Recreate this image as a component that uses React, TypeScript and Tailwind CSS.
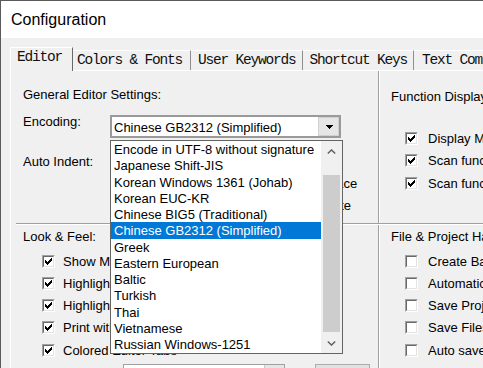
import React from "react";

function Check({ checked }: { checked?: boolean }) {
  return (
    <span className="block w-[13px] h-[13px] shrink-0 border border-t-[#a0a0a0] border-l-[#a0a0a0] border-r-white border-b-white">
      <span className="block w-full h-full border border-t-[#696969] border-l-[#696969] border-r-[#e3e3e3] border-b-[#e3e3e3] bg-white">
        {checked && (
          <svg width="9" height="9" viewBox="0 0 9 9" shapeRendering="crispEdges" className="block">
            <rect x="1" y="3" width="1" height="3" fill="#000" />
            <rect x="2" y="4" width="1" height="3" fill="#000" />
            <rect x="3" y="5" width="1" height="3" fill="#000" />
            <rect x="4" y="4" width="1" height="3" fill="#000" />
            <rect x="5" y="3" width="1" height="3" fill="#000" />
            <rect x="6" y="2" width="1" height="3" fill="#000" />
            <rect x="7" y="1" width="1" height="3" fill="#000" />
          </svg>
        )}
      </span>
    </span>
  );
}

function Row({ checked, label, gap, h }: { checked?: boolean; label: string; gap: string; h: string }) {
  return (
    <div className={`flex items-center whitespace-nowrap leading-[15px] ${gap} ${h}`}>
      <Check checked={checked} />
      <span>{label}</span>
    </div>
  );
}

const items = [
  "Encode in UTF-8 without signature",
  "Japanese Shift-JIS",
  "Korean Windows 1361 (Johab)",
  "Korean EUC-KR",
  "Chinese BIG5 (Traditional)",
  "Chinese GB2312 (Simplified)",
  "Greek",
  "Eastern European",
  "Baltic",
  "Turkish",
  "Thai",
  "Vietnamese",
  "Russian Windows-1251",
];

export default function App() {
  return (
    <div className="relative w-[483px] h-[368px] overflow-hidden bg-[#f0f0f0] border-l border-t border-[#5a5a5a] font-['Liberation_Sans',Arial,sans-serif] text-[13px] text-black flex flex-col">
      {/* Title bar */}
      <div className="h-[37px] shrink-0 bg-white pl-[10px] pt-[10px] text-[16px] leading-[18px]">Configuration</div>

      {/* Tabs */}
      <div className="h-[32px] shrink-0 flex items-end pl-[9px] font-['Liberation_Mono',monospace] text-[14.5px] leading-[15px] tracking-[-1.2px] whitespace-nowrap text-[#111]">
        <div className="relative z-10 h-[24px] -mb-px bg-[#f0f0f0] border-l border-t border-r border-l-white border-t-white border-r-[#696969] pl-[6px] pr-[10px] pt-[2px]">
          Editor
        </div>
        <div className="h-[20px] border-t border-r border-t-white border-r-[#8e8e8e] pl-[4px] pr-[8px] pt-[2px]">Colors &amp; Fonts</div>
        <div className="h-[20px] border-t border-r border-t-white border-r-[#8e8e8e] pl-[7px] pr-[6px] pt-[2px]">User Keywords</div>
        <div className="h-[20px] border-t border-r border-t-white border-r-[#8e8e8e] pl-[7px] pr-[6px] pt-[2px]">Shortcut Keys</div>
        <div className="h-[20px] border-t border-t-white pl-[8px] pr-[6px] pt-[2px]">Text Completion</div>
      </div>

      {/* Page */}
      <div className="flex-1 ml-[9px] border-l border-t border-white pl-[5px] flex flex-col">
        {/* top row */}
        <div className="flex h-[153px] shrink-0 border-b border-[#a0a0a0]">
          <div className="w-[363px] shrink-0 border-r border-[#a0a0a0] pl-[7px] pt-[16px]">
            <div className="leading-[15px] whitespace-nowrap">General Editor Settings:</div>
            <div className="mt-[12px] flex">
              <div className="w-[87px] leading-[15px]">Encoding:</div>
              <div className="mt-px w-[231px] h-[23px] border-2 border-[#9a9a9a] bg-white flex">
                <div className="flex-1 pl-[2px] pt-[3px] leading-[15px] whitespace-nowrap overflow-hidden">
                  Chinese GB2312 (Simplified)
                </div>
                <div className="w-[21px] h-full bg-[#e6e6e6] border border-[#d0d0d0] flex items-center justify-center">
                  <svg width="8" height="4" viewBox="0 0 8 4" shapeRendering="crispEdges" className="block">
                    <path d="M0 0H8L4 4Z" fill="#000" />
                  </svg>
                </div>
              </div>
            </div>
            <div className="mt-[16px] flex">
              <div className="w-[87px] leading-[15px]">Auto Indent:</div>
              <div className="-mt-[2px] w-[231px] h-[23px] border-2 border-[#9a9a9a] bg-white" />
            </div>
            <div className="mt-px ml-[213px] flex items-center gap-[7px] leading-[15px] whitespace-nowrap">
              <Check checked />
              <span>Tab inserts space</span>
            </div>
            <div className="mt-[7px] ml-[217px] flex items-center gap-[7px] leading-[15px] whitespace-nowrap">
              <Check />
              <span>Indent on Paste</span>
            </div>
          </div>
          <div className="flex-1 border-l border-white pl-[11px] pt-[18px] whitespace-nowrap">
            <div className="leading-[15px]">Function Display</div>
            <div className="mt-[23px] pl-[14px] flex flex-col">
              <Row checked label="Display Member Functions" gap="gap-[10px]" h="h-[22.5px]" />
              <Row checked label="Scan functions on open" gap="gap-[10px]" h="h-[22.5px]" />
              <Row checked label="Scan functions on save" gap="gap-[10px]" h="h-[22.5px]" />
            </div>
          </div>
        </div>

        {/* bottom row */}
        <div className="flex flex-1 border-t border-white">
          <div className="w-[363px] shrink-0 border-r border-[#a0a0a0] pl-[7px] pt-[4px]">
            <div className="leading-[15px]">Look &amp; Feel:</div>
            <div className="mt-[6px] pl-[19px] flex flex-col">
              <Row checked label="Show Menu Icons" gap="gap-[8px]" h="h-[22.25px]" />
              <Row checked label="Highlight Current Line" gap="gap-[8px]" h="h-[22.25px]" />
              <Row checked label="Highlight Matching Braces" gap="gap-[8px]" h="h-[22.25px]" />
              <Row checked label="Print with Syntax Coloring" gap="gap-[8px]" h="h-[22.25px]" />
              <Row checked label="Colored Editor Tabs" gap="gap-[8px]" h="h-[22.25px]" />
            </div>
            <div className="mt-[2.5px] ml-[100px] flex">
              <div className="w-[162px] h-[22px] border border-[#a0a0a0] bg-white flex justify-end">
                <div className="w-[20px] h-full border-l border-[#c8c8c8] bg-[#e6e6e6]" />
              </div>
              <div className="ml-[30px] w-[55px] h-[22px] border border-[#adadad] bg-[#e1e1e1]" />
            </div>
          </div>
          <div className="flex-1 border-l border-white pl-[11px] pt-[4px] whitespace-nowrap">
            <div className="leading-[15px]">File &amp; Project Handling</div>
            <div className="mt-[6px] pl-[14px] flex flex-col">
              <Row label="Create Backup Files" gap="gap-[10px]" h="h-[22.25px]" />
              <Row label="Automatically reload files" gap="gap-[10px]" h="h-[22.25px]" />
              <Row label="Save Project on exit" gap="gap-[10px]" h="h-[22.25px]" />
              <Row label="Save Files on exit" gap="gap-[10px]" h="h-[22.25px]" />
              <Row label="Auto save every" gap="gap-[10px]" h="h-[22.25px]" />
            </div>
          </div>
        </div>
      </div>

      {/* Dropdown list overlay */}
      <div className="absolute left-[109px] top-[139px] w-[233px] h-[214px] border border-[#646464] bg-white flex z-20">
        <div className="w-[210px] flex flex-col">
          {items.map((t, i) => (
            <div
              key={t}
              className={`h-[16.25px] shrink-0 leading-[15.25px] pt-px pl-[3px] whitespace-nowrap overflow-hidden ${
                i === 5 ? "bg-[#0078d7] text-white" : ""
              }`}
            >
              {t}
            </div>
          ))}
        </div>
        <div className="flex-1 bg-[#f0f0f0] flex flex-col">
          <div className="h-[20px] shrink-0 flex items-center justify-center">
            <svg width="9" height="5" viewBox="0 0 9 5" className="block">
              <path d="M0.8 4.5 L4.5 0.9 L8.2 4.5" fill="none" stroke="#606060" strokeWidth="1.4" />
            </svg>
          </div>
          <div className="h-[14px] shrink-0" />
          <div className="mx-[2px] h-[157px] shrink-0 bg-[#cdcdcd]" />
          <div className="flex-1" />
          <div className="h-[20px] shrink-0 flex items-center justify-center">
            <svg width="9" height="5" viewBox="0 0 9 5" className="block">
              <path d="M0.8 0.5 L4.5 4.1 L8.2 0.5" fill="none" stroke="#606060" strokeWidth="1.4" />
            </svg>
          </div>
        </div>
      </div>
    </div>
  );
}
